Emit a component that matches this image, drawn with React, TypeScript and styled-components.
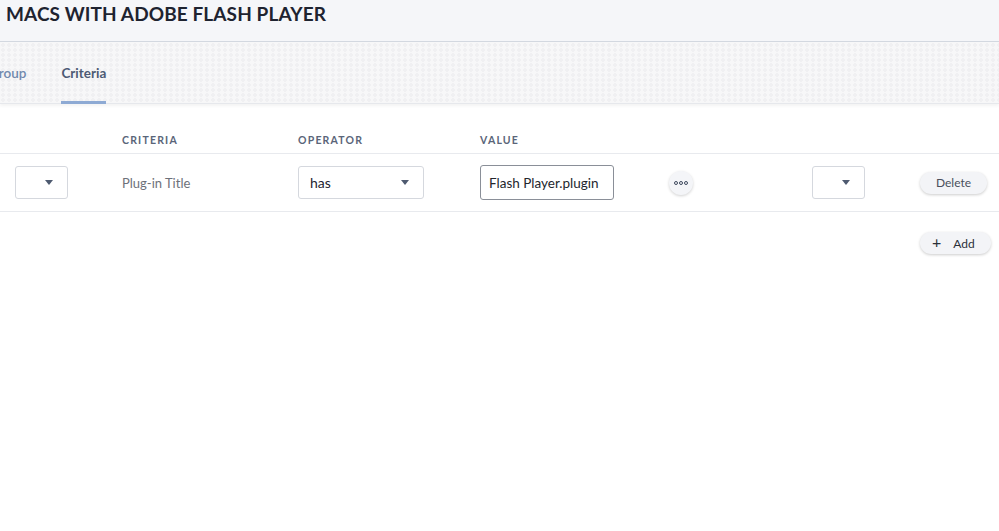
import React from 'react';
import styled, { createGlobalStyle } from 'styled-components';

const GlobalStyle = createGlobalStyle`
  html, body {
    margin: 0;
    padding: 0;
    background: #fff;
    font-family: Lato, "Open Sans", Arial, sans-serif;
  }
`;

const Page = styled.div`
  width: 999px;
  min-height: 531px;
  background: #fff;
  overflow: hidden;
`;

const Header = styled.div`
  height: 41px;
  background: #f5f6f9;
  border-bottom: 1px solid #d3d8e0;
  display: flex;
  align-items: center;
  padding: 0 6px;
  box-sizing: content-box;
`;

const Title = styled.h1`
  margin: 0;
  margin-top: -14px;
  font-size: 19px;
  font-weight: 700;
  color: #1e2330;
  letter-spacing: 0.1px;
`;

const TabBar = styled.div`
  height: 61px;
  display: flex;
  align-items: stretch;
  background-color: #f7f7f8;
  background-image: radial-gradient(circle at 3px 3px, #f0f0f2 1.6px, transparent 2px);
  background-size: 6px 5px;
  border-bottom: 1px solid #e6e8ec;
  box-shadow: 0 2px 3px rgba(0, 0, 0, 0.05);
`;

const TabList = styled.div`
  display: flex;
  gap: 35px;
  margin-left: -11px;
`;

const Tab = styled.div<{ active?: boolean }>`
  display: flex;
  align-items: center;
  padding-top: 3px;
  font-size: 13.5px;
  font-weight: ${({ active }) => (active ? 700 : 600)};
  color: ${({ active }) => (active ? '#4d5a74' : '#7189ad')};
  border-bottom: 3px solid ${({ active }) => (active ? '#8eaad4' : 'transparent')};
  margin-bottom: -1px;
`;

const Table = styled.div`
  margin-top: 20px;
`;

const Row = styled.div<{ head?: boolean }>`
  display: grid;
  grid-template-columns: 107px 176px 182px 188px 144px 108px 1fr;
  align-items: center;
  padding-left: 15px;
  height: ${({ head }) => (head ? '29px' : '57px')};
  border-bottom: 1px solid #e8eaee;
`;

const HeadCell = styled.div`
  font-size: 10.5px;
  font-weight: 700;
  letter-spacing: 1.2px;
  color: #5a6579;
  padding-top: 2px;
`;

const TextCell = styled.div`
  font-size: 13px;
  color: #6d717a;
`;

const Select = styled.div<{ w: number }>`
  width: ${({ w }) => w}px;
  height: 33px;
  box-sizing: border-box;
  border: 1px solid #d5d8de;
  border-radius: 3px;
  display: flex;
  align-items: center;
  justify-content: space-between;
  padding: 0 14px 0 11px;
  font-size: 14px;
  color: #1e2330;
  background: #fff;
`;

const Caret = styled.span`
  width: 0;
  height: 0;
  border-left: 4.5px solid transparent;
  border-right: 4.5px solid transparent;
  border-top: 5px solid #4e5a70;
`;

const Input = styled.div`
  width: 134px;
  height: 35px;
  box-sizing: border-box;
  border: 1px solid #8a8f98;
  border-radius: 3px;
  display: flex;
  align-items: center;
  padding: 0 8px;
  font-size: 13.5px;
  color: #23262d;
  white-space: nowrap;
  overflow: hidden;
`;

const RoundBtn = styled.div`
  width: 24px;
  height: 24px;
  border-radius: 50%;
  background: #f4f5f8;
  box-shadow: 0 1px 3px rgba(0, 0, 0, 0.18);
  display: flex;
  align-items: center;
  justify-content: center;
  gap: 1px;
  margin-left: 1px;
`;

const Dot = styled.span`
  width: 4px;
  height: 4px;
  border-radius: 50%;
  border: 1.2px solid #3f4a5e;
  box-sizing: border-box;
`;

const PillBtn = styled.button`
  height: 22px;
  border: none;
  border-radius: 11px;
  background: #f3f4f7;
  box-shadow: 0 1px 3px rgba(0, 0, 0, 0.2);
  font-family: inherit;
  font-size: 12px;
  color: #4a505c;
  display: flex;
  align-items: center;
  gap: 12px;
  padding: 0 16px;
  cursor: pointer;
`;

const DeleteBtn = styled(PillBtn)`
  width: 67px;
  justify-content: center;
`;

const AddRow = styled.div`
  display: flex;
  justify-content: flex-end;
  padding: 20px 8px 0 0;
`;

const AddBtn = styled(PillBtn)`
  width: 71px;
  height: 22px;
  padding: 0 12px;
  color: #2b303a;
`;

const Plus = styled.span`
  font-size: 16px;
  line-height: 1;
  color: #2b303a;
  margin-top: -2px;
`;

export default function App() {
  return (
    <Page>
      <GlobalStyle />
      <Header>
        <Title>MACS WITH ADOBE FLASH PLAYER</Title>
      </Header>
      <TabBar>
        <TabList>
          <Tab>Group</Tab>
          <Tab active>Criteria</Tab>
        </TabList>
      </TabBar>
      <Table>
        <Row head>
          <div />
          <HeadCell>CRITERIA</HeadCell>
          <HeadCell>OPERATOR</HeadCell>
          <HeadCell>VALUE</HeadCell>
          <div />
          <div />
          <div />
        </Row>
        <Row>
          <Select w={53}>
            <span />
            <Caret />
          </Select>
          <TextCell>Plug-in Title</TextCell>
          <Select w={126}>
            <span>has</span>
            <Caret />
          </Select>
          <Input>Flash Player.plugin</Input>
          <RoundBtn>
            <Dot />
            <Dot />
            <Dot />
          </RoundBtn>
          <Select w={53}>
            <span />
            <Caret />
          </Select>
          <div>
            <DeleteBtn>Delete</DeleteBtn>
          </div>
        </Row>
      </Table>
      <AddRow>
        <AddBtn>
          <Plus>+</Plus>
          Add
        </AddBtn>
      </AddRow>
    </Page>
  );
}
